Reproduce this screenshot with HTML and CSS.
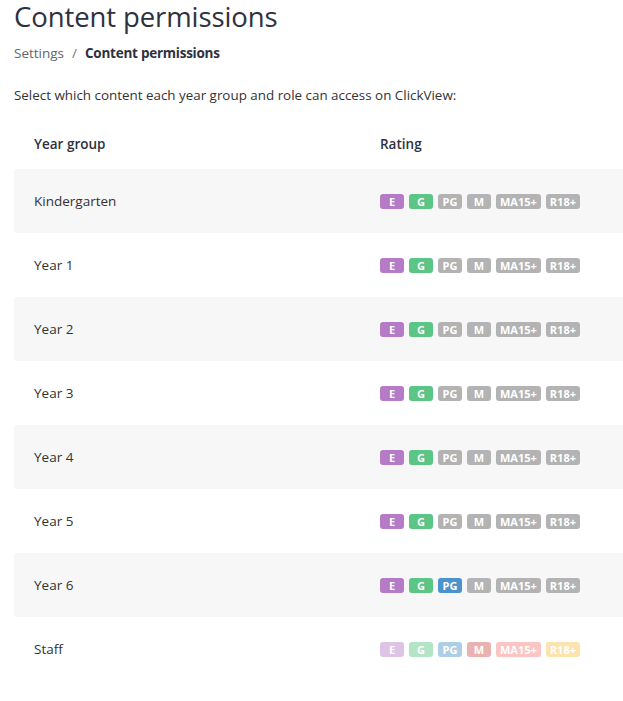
FILE: index.html
```html
<!DOCTYPE html>
<html lang="en">
<head>
<meta charset="utf-8">
<title>Content permissions</title>
<link rel="stylesheet" href="styles.css">
</head>
<body>
<main class="page">
  <h1 class="title">Content permissions</h1>
  <nav class="crumbs"><span class="crumb">Settings</span><span class="sep">/</span><span class="crumb current">Content permissions</span></nav>
  <p class="intro">Select which content each year group and role can access on ClickView:</p>
  <div class="table">
    <div class="row head"><div class="c1">Year group</div><div class="c2">Rating</div></div>
    <div class="row alt"><div class="c1">Kindergarten</div><div class="c2 badges"><span class="b e">E</span><span class="b g">G</span><span class="b off">PG</span><span class="b off">M</span><span class="b off">MA15+</span><span class="b off">R18+</span></div></div>
    <div class="row"><div class="c1">Year 1</div><div class="c2 badges"><span class="b e">E</span><span class="b g">G</span><span class="b off">PG</span><span class="b off">M</span><span class="b off">MA15+</span><span class="b off">R18+</span></div></div>
    <div class="row alt"><div class="c1">Year 2</div><div class="c2 badges"><span class="b e">E</span><span class="b g">G</span><span class="b off">PG</span><span class="b off">M</span><span class="b off">MA15+</span><span class="b off">R18+</span></div></div>
    <div class="row"><div class="c1">Year 3</div><div class="c2 badges"><span class="b e">E</span><span class="b g">G</span><span class="b off">PG</span><span class="b off">M</span><span class="b off">MA15+</span><span class="b off">R18+</span></div></div>
    <div class="row alt"><div class="c1">Year 4</div><div class="c2 badges"><span class="b e">E</span><span class="b g">G</span><span class="b off">PG</span><span class="b off">M</span><span class="b off">MA15+</span><span class="b off">R18+</span></div></div>
    <div class="row"><div class="c1">Year 5</div><div class="c2 badges"><span class="b e">E</span><span class="b g">G</span><span class="b off">PG</span><span class="b off">M</span><span class="b off">MA15+</span><span class="b off">R18+</span></div></div>
    <div class="row alt"><div class="c1">Year 6</div><div class="c2 badges"><span class="b e">E</span><span class="b g">G</span><span class="b pg">PG</span><span class="b off">M</span><span class="b off">MA15+</span><span class="b off">R18+</span></div></div>
    <div class="row"><div class="c1">Staff</div><div class="c2 badges faded"><span class="b e">E</span><span class="b g">G</span><span class="b pg">PG</span><span class="b m">M</span><span class="b ma">MA15+</span><span class="b r">R18+</span></div></div>
  </div>
</main>
</body>
</html>
```
FILE: styles.css
```css
html, body { margin: 0; padding: 0; background: #fff; }
body { font-family: "Open Sans", "Noto Sans", sans-serif; color: #333; overflow: hidden; }
.page { padding: 0 0 0 14px; width: 640px; }
.title { margin: 0; font-size: 27.5px; font-weight: 400; color: #2e3140; line-height: 34px; letter-spacing: -0.1px; }
.crumbs { margin-top: 9px; font-size: 13.5px; line-height: 20px; color: #666; display: flex; gap: 8px; }
.crumb.current { color: #2e3140; font-weight: 700; letter-spacing: -0.25px; }
.sep { color: #777; }
.intro { margin: 22px 0 0; font-size: 13.4px; line-height: 20px; color: #333; }
.table { margin-top: 14px; }
.row { display: flex; align-items: center; height: 64px; border-radius: 4px; font-size: 13.5px; color: #333; }
.row.head { height: 50px; font-weight: 600; color: #2e3140; }
.row.alt { background: #f7f7f7; }
.c1 { width: 346px; padding-left: 20px; }
.c2 { flex: 1; }
.badges { display: flex; gap: 5px; }
.b { display: inline-flex; align-items: center; justify-content: center; height: 15px; min-width: 24px; padding: 0 4px; box-sizing: border-box; border-radius: 3px; color: #fff; font-size: 11px; font-weight: 700; }
.b.e { background: #b57bc6; }
.b.g { background: #5ac585; }
.b.pg { background: #4b93cc; }
.b.off { background: #b3b3b3; }
.b.m { background: #d2574f; }
.b.ma { background: #f57f7a; }
.b.r { background: #fcc44b; }
.faded .b { opacity: 0.45; }
```
